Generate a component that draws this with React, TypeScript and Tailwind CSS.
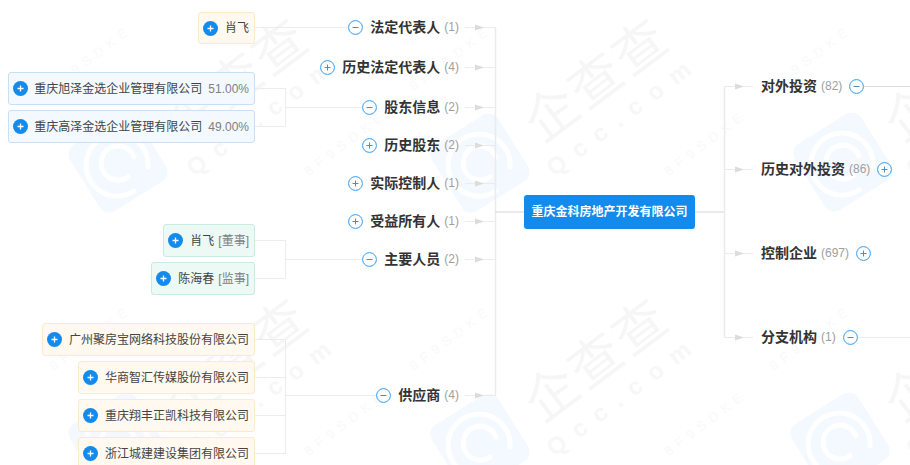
import type { ReactNode } from "react";

const FONT = "font-['Liberation_Sans','Noto_Sans_CJK_SC',sans-serif]";

// Filled toggle inside a company card.
function PlusDot() {
  return (
    <svg viewBox="0 0 15 15" className="h-[15px] w-[15px] shrink-0">
      <circle cx="7.5" cy="7.5" r="7.5" fill="#128bed" />
      <path d="M4.5 7.5h6M7.5 4.5v6" stroke="#fff" strokeWidth="1.3" />
    </svg>
  );
}

// Outlined toggle beside a category label.
function Toggle({ open }: { open?: boolean }) {
  return (
    <svg viewBox="0 0 15 15" className="h-[15px] w-[15px] shrink-0">
      <circle cx="7.5" cy="7.5" r="6.9" fill="#fff" stroke="#128bed" strokeWidth="1" opacity="0.85" />
      <path d={open ? "M4.5 7.5h6" : "M4.5 7.5h6M7.5 4.5v6"} stroke="#4a90c8" strokeWidth="1" />
    </svg>
  );
}

const cardTone = {
  yellow: "border-[#fbeacd] bg-[#fff9ef]",
  blue: "border-[#c8e0f5] bg-[#f3f9fe]",
  green: "border-[#c8ecdd] bg-[#edf9f4]",
};

function Card({
  pos,
  tone,
  name,
  tag,
  short,
}: {
  pos: string;
  tone: keyof typeof cardTone;
  name: string;
  tag?: string;
  short?: boolean;
}) {
  const blue = tone === "blue";
  return (
    <div
      className={`absolute flex items-center rounded-[3px] border pl-1 pr-[5px] text-xs text-[#444] ${short ? "h-[32px]" : "h-[33px]"} ${cardTone[tone]} ${pos}`}
    >
      <PlusDot />
      <span className={`whitespace-nowrap ${blue ? "ml-[6px]" : "ml-[7px]"}`}>{name}</span>
      {tag && (
        <span className={`whitespace-nowrap text-[#808080] ${blue ? "ml-[6px]" : "ml-1"}`}>{tag}</span>
      )}
    </div>
  );
}

function LeftLabel({
  pos,
  name,
  count,
  open,
}: {
  pos: string;
  name: string;
  count: number;
  open?: boolean;
}) {
  return (
    <div className={`absolute flex h-5 items-center ${pos}`}>
      <Toggle open={open} />
      <span className="ml-[7px] whitespace-nowrap text-sm font-semibold text-[#333]">{name}</span>
      <span className="ml-1 whitespace-nowrap text-xs text-[#a0a0a0]">({count})</span>
    </div>
  );
}

function RightLabel({
  pos,
  name,
  count,
  open,
}: {
  pos: string;
  name: string;
  count: number;
  open?: boolean;
}) {
  return (
    <div className={`absolute flex h-5 items-center ${pos}`}>
      <span className="whitespace-nowrap text-sm font-semibold text-[#333]">{name}</span>
      <span className="ml-1 whitespace-nowrap text-xs text-[#a0a0a0]">({count})</span>
      <span className="ml-[7px]">
        <Toggle open={open} />
      </span>
    </div>
  );
}

function Arrow({ x, y }: { x: number; y: number }) {
  return <path d={`M${x} ${y - 3}L${x + 9} ${y}L${x} ${y + 3}Z`} fill="#dcdcdc" />;
}

function Connectors() {
  const leftRows = [27, 67, 107, 145, 183, 221, 259, 395];
  const rightRows = [86, 169, 253, 337];
  return (
    <svg className="absolute left-0 top-0 h-[465px] w-[910px]" viewBox="0 0 910 465" fill="none">
      <g stroke="#ececec" strokeWidth="1">
        <path d="M255.5 27.5H348" />
        <path d="M255 88.5H285.5V126.5H255M285 107.5H362" />
        <path d="M255 240.5H285.5V278.5H255M285 259.5H362" />
        <path d="M255 339.5H285.5V453.5H255M255 377.5H285M255 415.5H285M285 395.5H376" />
        {leftRows.map((y) => (
          <path key={y} d={`M465 ${y + 0.5}H495`} />
        ))}
        {rightRows.map((y) => (
          <path key={y} d={`M724 ${y + 0.5}H753`} />
        ))}
      </g>
      <path d="M495.5 27V396M724.5 86V338" stroke="#ebebeb" strokeWidth="1.5" />
      <path d="M495 212H524M695 212H724" stroke="#e4e4e4" strokeWidth="1.5" />
      <path d="M864 86.5H910" stroke="#dedede" strokeWidth="1" />
      <path d="M858 337.5H910" stroke="#ececec" strokeWidth="1" />
      {leftRows.map((y) => (
        <Arrow key={y} x={475} y={y + 0.5} />
      ))}
      {rightRows.map((y) => (
        <Arrow key={y} x={735} y={y + 0.5} />
      ))}
    </svg>
  );
}

// Rounded diamond stamp of the watermark.
function WaterLogo({ pos }: { pos: string }) {
  return (
    <svg viewBox="0 0 120 120" className={`absolute h-[120px] w-[120px] ${pos}`} fill="none">
      <rect x="21" y="21" width="78" height="78" rx="11" transform="rotate(-32 60 60)" fill="#f3f9fe" />
      <g stroke="#fff" strokeWidth="5" strokeLinecap="round">
        <path d="M76 88A31 31 0 1 1 90 64" />
        <path d="M70 74A17 17 0 1 1 76 54" />
      </g>
    </svg>
  );
}

function WaterMark({ pos }: { pos: string }) {
  return (
    <div className={`absolute flex w-[200px] -rotate-[37deg] flex-col items-center ${pos}`}>
      <span className="whitespace-nowrap text-[52px] leading-none tracking-[3px] text-[#f6f6f6]">企查查</span>
      <span className="mt-[6px] whitespace-nowrap text-2xl font-bold leading-none tracking-[12px] text-[#f7f7f7]">
        Qcc.com
      </span>
    </div>
  );
}

function WaterLine({ pos, children }: { pos: string; children: ReactNode }) {
  return (
    <span
      className={`absolute h-4 w-[110px] -rotate-[37deg] whitespace-nowrap text-[13px] leading-4 tracking-[6px] text-[#f9f9f9] ${pos}`}
    >
      {children}
    </span>
  );
}

function Watermark() {
  return (
    <div className="absolute inset-0 overflow-hidden">
      <WaterLogo pos="left-[58px] top-[103px]" />
      <WaterLogo pos="left-[420px] top-[103px]" />
      <WaterLogo pos="left-[783px] top-[102px]" />
      <WaterLogo pos="left-[58px] top-[382px]" />
      <WaterLogo pos="left-[420px] top-[383px]" />
      <WaterLogo pos="left-[780px] top-[382px]" />

      <WaterMark pos="left-[146px] top-[51px]" />
      <WaterMark pos="left-[506px] top-[51px]" />
      <WaterMark pos="left-[866px] top-[51px]" />
      <WaterMark pos="left-[146px] top-[331px]" />
      <WaterMark pos="left-[506px] top-[331px]" />
      <WaterMark pos="left-[866px] top-[331px]" />

      <WaterLine pos="left-[655px] top-[412px]">8F9SDKE</WaterLine>
      <WaterLine pos="left-[295px] top-[412px]">8F9SDKE</WaterLine>
      <WaterLine pos="left-[655px] top-[132px]">8F9SDKE</WaterLine>
      <WaterLine pos="left-[295px] top-[132px]">8F9SDKE</WaterLine>
      <WaterLine pos="left-[760px] top-[327px]">8F9SDKE</WaterLine>
      <WaterLine pos="left-[400px] top-[327px]">8F9SDKE</WaterLine>
      <WaterLine pos="left-[40px] top-[327px]">8F9SDKE</WaterLine>
      <WaterLine pos="left-[760px] top-[47px]">8F9SDKE</WaterLine>
      <WaterLine pos="left-[400px] top-[47px]">8F9SDKE</WaterLine>
      <WaterLine pos="left-[40px] top-[47px]">8F9SDKE</WaterLine>
    </div>
  );
}

export default function App() {
  return (
    <div className={`relative h-[465px] w-[910px] overflow-hidden bg-white ${FONT}`}>
      <Watermark />
      <Connectors />

      <Card pos="right-[655px] top-[12px]" tone="yellow" name="肖飞" short />
      <Card pos="right-[655px] top-[72px]" tone="blue" name="重庆旭泽金选企业管理有限公司" tag="51.00%" />
      <Card pos="right-[655px] top-[110px]" tone="blue" name="重庆高泽金选企业管理有限公司" tag="49.00%" />
      <Card pos="right-[655px] top-[224px]" tone="green" name="肖飞" tag="[董事]" />
      <Card pos="right-[655px] top-[262px]" tone="green" name="陈海春" tag="[监事]" />
      <Card pos="right-[655px] top-[323px]" tone="yellow" name="广州聚房宝网络科技股份有限公司" />
      <Card pos="right-[655px] top-[361px]" tone="yellow" name="华商智汇传媒股份有限公司" />
      <Card pos="right-[655px] top-[399px]" tone="yellow" name="重庆翔丰正凯科技有限公司" />
      <Card pos="right-[655px] top-[437px]" tone="yellow" name="浙江城建建设集团有限公司" />

      <LeftLabel pos="right-[451px] top-[17px]" name="法定代表人" count={1} open />
      <LeftLabel pos="right-[451px] top-[57px]" name="历史法定代表人" count={4} />
      <LeftLabel pos="right-[451px] top-[97px]" name="股东信息" count={2} open />
      <LeftLabel pos="right-[451px] top-[135px]" name="历史股东" count={2} />
      <LeftLabel pos="right-[451px] top-[173px]" name="实际控制人" count={1} />
      <LeftLabel pos="right-[451px] top-[211px]" name="受益所有人" count={1} />
      <LeftLabel pos="right-[451px] top-[249px]" name="主要人员" count={2} open />
      <LeftLabel pos="right-[451px] top-[385px]" name="供应商" count={4} open />

      <div className="absolute left-[524px] top-[195px] flex h-[34px] w-[171px] items-center justify-center rounded-[3px] bg-[#128bed] text-xs font-bold text-white">
        重庆金科房地产开发有限公司
      </div>

      <RightLabel pos="left-[761px] top-[76px]" name="对外投资" count={82} open />
      <RightLabel pos="left-[761px] top-[159px]" name="历史对外投资" count={86} />
      <RightLabel pos="left-[761px] top-[243px]" name="控制企业" count={697} />
      <RightLabel pos="left-[761px] top-[327px]" name="分支机构" count={1} open />
    </div>
  );
}
